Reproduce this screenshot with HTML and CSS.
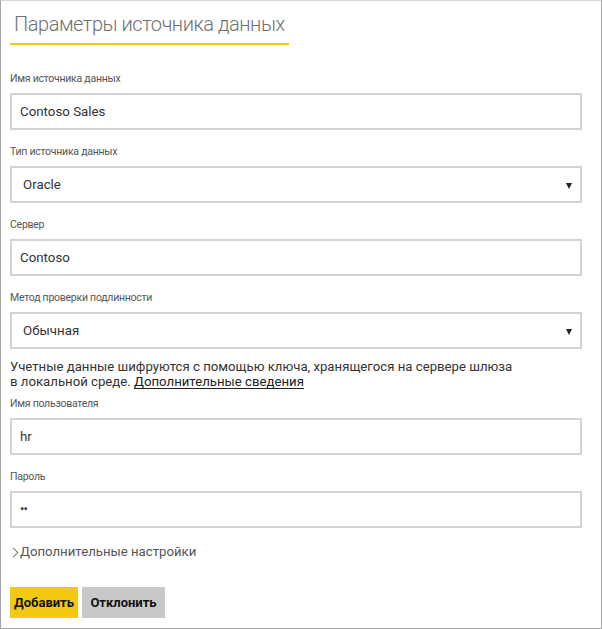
FILE: index.html
```html
<!DOCTYPE html>
<html lang="ru">
<head>
<meta charset="utf-8">
<link rel="stylesheet" href="styles.css">
</head>
<body>
<div class="frame">
  <div class="title-wrap"><h1 class="title">Параметры источника данных</h1></div>

  <div class="field first">
    <div class="label">Имя источника данных</div>
    <div class="box">Contoso Sales</div>
  </div>
  <div class="field">
    <div class="label">Тип источника данных</div>
    <div class="box select">Oracle<span class="arrow"></span></div>
  </div>
  <div class="field">
    <div class="label">Сервер</div>
    <div class="box">Contoso</div>
  </div>
  <div class="field">
    <div class="label">Метод проверки подлинности</div>
    <div class="box select">Обычная<span class="arrow"></span></div>
  </div>

  <p class="note">Учетные данные шифруются с помощью ключа, хранящегося на сервере шлюза<br>в локальной среде. <a class="link">Дополнительные сведения</a></p>

  <div class="field tight">
    <div class="label">Имя пользователя</div>
    <div class="box">hr</div>
  </div>
  <div class="field">
    <div class="label">Пароль</div>
    <div class="box pwd">••</div>
  </div>

  <div class="advanced"><span class="chev"></span>Дополнительные настройки</div>

  <div class="buttons">
    <button class="btn primary">Добавить</button>
    <button class="btn secondary">Отклонить</button>
  </div>
</div>
</body>
</html>
```

FILE: styles.css
```css
* { box-sizing: border-box; }
html, body { margin: 0; padding: 0; background: #fff; }
body { font-family: Roboto, "Noto Sans", sans-serif; color: #333; }

.frame {
  width: 602px;
  height: 629px;
  border: 1px solid #a6a6a6;
  border-top-color: #d6d6d6;
  padding: 0 19px 0 9px;
}

.title-wrap { padding-top: 10px; }
.title {
  display: inline-block;
  margin: 0;
  padding: 0 4px 5px 4px;
  font-size: 20px;
  font-weight: 300;
  line-height: 27px;
  letter-spacing: -0.45px;
  color: #707070;
  border-bottom: 2px solid #f2c811;
}

.field { margin-top: 14px; }
.field.first { margin-top: 26px; }
.field.tight { margin-top: 7px; }
.label {
  font-size: 10.5px;
  line-height: 15px;
  letter-spacing: -0.25px;
  color: #555;
  margin-bottom: 7px;
}
.box {
  position: relative;
  height: 37px;
  border: 2px solid #d4d4d4;
  padding: 0 8px;
  font-size: 13.3px;
  line-height: 33px;
  color: #333;
}
.box.select { padding-left: 11px; }
.arrow {
  position: absolute;
  right: 8px;
  top: 15px;
  width: 0;
  height: 0;
  border-left: 3.5px solid transparent;
  border-right: 3.5px solid transparent;
  border-top: 6px solid #222;
}
.box.pwd { font-size: 13px; letter-spacing: -1px; line-height: 31px; }

.note {
  margin: 10px 0 0 0;
  font-size: 13.2px;
  line-height: 15px;
  color: #333;
}
.link {
  color: #222;
  text-decoration: underline;
  text-underline-offset: 2px;
}

.advanced {
  margin-top: 14px;
  font-size: 13.2px;
  line-height: 20px;
  color: #555;
  display: flex;
  align-items: center;
}
.chev {
  display: inline-block;
  width: 7px;
  height: 7px;
  border-right: 1px solid #777;
  border-top: 1px solid #777;
  transform: rotate(45deg);
  margin: 0 3px 0 0;
}

.buttons {
  margin-top: 25px;
  display: flex;
  gap: 4px;
}
.btn {
  font-family: inherit;
  font-size: 13px;
  font-weight: 700;
  height: 31px;
  border: 0;
  padding: 0 4px;
  color: #111;
}
.primary { background: #f2c811; width: 68px; }
.secondary { background: #c8c8c8; width: 83px; }
```
